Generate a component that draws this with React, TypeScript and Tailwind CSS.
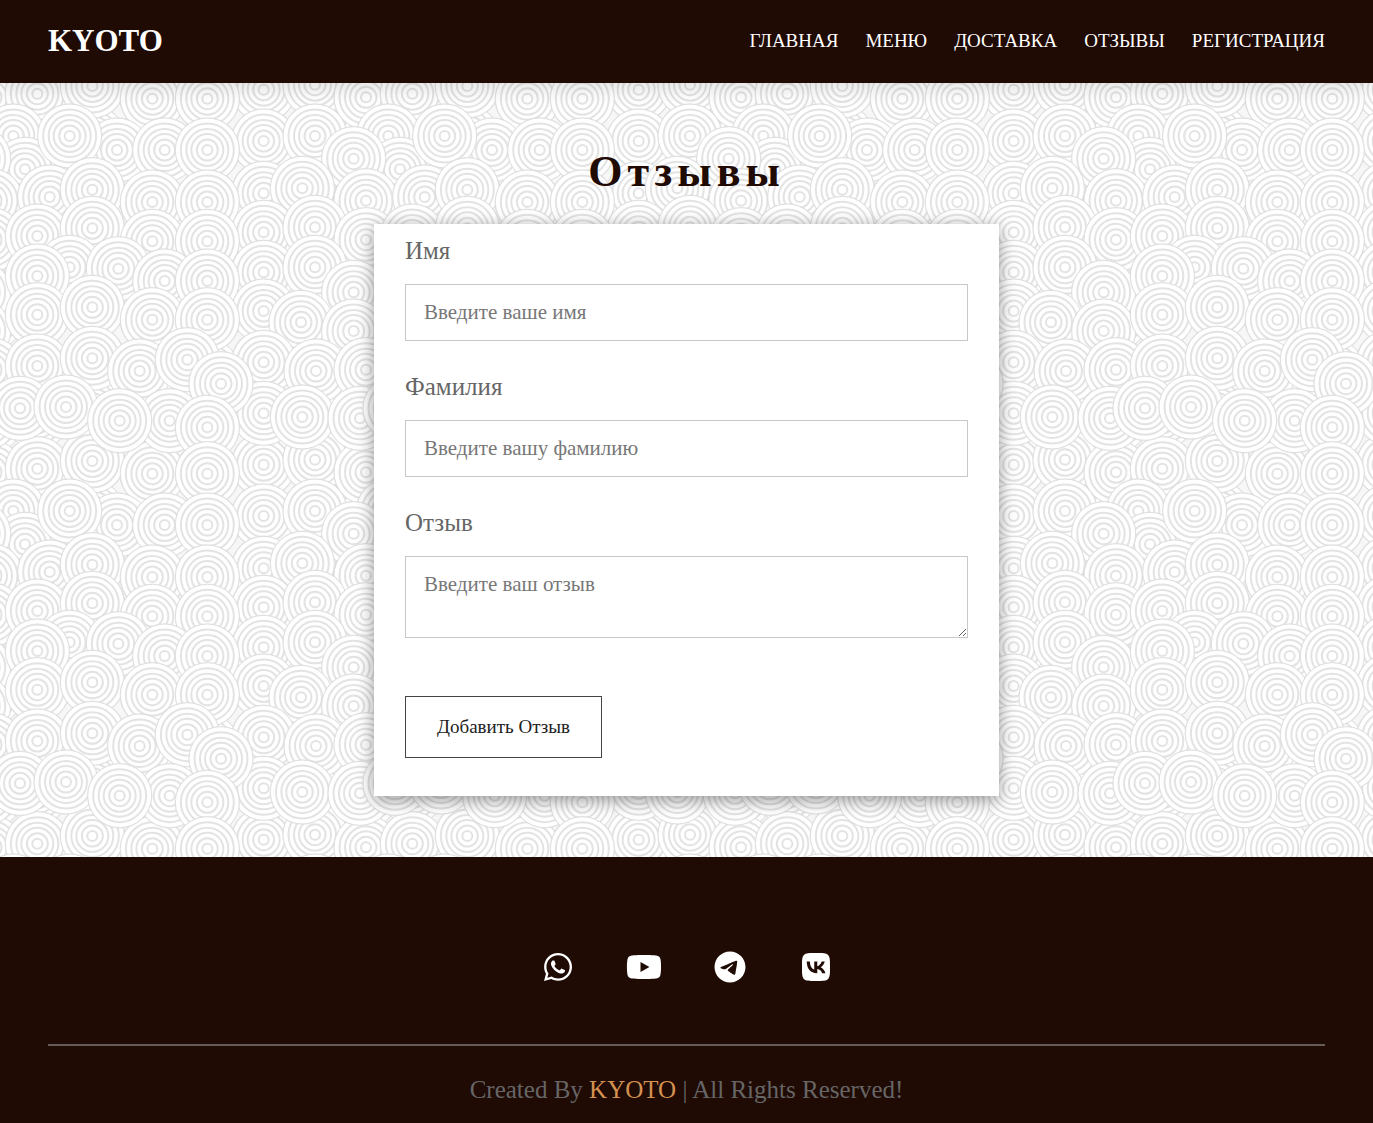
import type { IconType } from "react-icons";
import { FaTelegram, FaVk, FaWhatsapp, FaYoutube } from "react-icons/fa6";

const TILE = 375;
const RING_RADII = [5, 10.5, 16, 21, 26.5];

type Point = [number, number];

/* Coordinates are in thirds of a pixel, on a 1125 x 1125 tile. */
const columns: Point[] = [
  [791, 20], [945, 5], [1098, 43], [112, 32], [277, 9], [457, 47], [622, 47],
];
const rowOffsets = [0, 154, 310, 428, 547, 663, 817, 970];

const baseDiscs: Point[] = rowOffsets.flatMap((dy) =>
  columns.map(([x, y]): Point => [x, y + dy]),
);

const topDiscs: Point[] = [
  [791, 20], [945, 5], [1098, 43], [112, 32], [277, 9], [457, 47], [622, 47],
  [791, 174], [945, 159], [40, 159], [75, 259], [1061, 227], [351, 201], [209, 159], [494, 201], [622, 201],
  [791, 331], [907, 316], [1098, 353], [149, 342], [277, 320], [457, 357], [622, 357],
  [791, 448], [945, 433], [1098, 470], [112, 459], [277, 436], [457, 475], [622, 475],
  [791, 568], [945, 553], [1061, 628], [209, 553], [112, 579], [355, 557], [494, 594], [622, 594],
  [791, 684], [903, 718], [1061, 744], [112, 695], [277, 673], [457, 710], [622, 710],
  [791, 838], [948, 864], [1098, 860], [112, 849], [277, 826], [419, 864], [562, 830],
  [791, 991], [907, 1002], [1080, 1006], [60, 976], [198, 972], [509, 1013], [359, 1013], [663, 902], [622, 1033],
];

const repeat = (points: Point[]) =>
  points.flatMap(([x, y]) =>
    [-1, 0, 1].flatMap((i) =>
      [0, 1].map((j): Point => [x / 3 + i * TILE, y / 3 + j * TILE]),
    ),
  );

const discs = [
  ...repeat(baseDiscs),
  ...repeat(topDiscs),
  /* The column that runs over the seam between two tiles. */
  [622 / 3, 47 / 3 + TILE] as Point,
];

function WaveBackground() {
  return (
    <svg className="absolute inset-0 h-full w-full" aria-hidden="true">
      <defs>
        <g id="disc">
          <circle r="33" fill="#d4d4d4" opacity="0.25" />
          <circle r="32" fill="#ffffff" stroke="#dedede" strokeWidth="1" />
          {RING_RADII.map((r) => (
            <circle key={r} r={r} fill="none" stroke="#e3e3e3" strokeWidth="2" />
          ))}
        </g>
        <pattern id="waves" width={TILE} height={TILE} patternUnits="userSpaceOnUse">
          <rect width={TILE} height={TILE} fill="#f7f7f7" />
          {discs.map(([x, y], i) => (
            <use key={i} href="#disc" x={x} y={y} />
          ))}
        </pattern>
      </defs>
      <rect width="100%" height="100%" fill="url(#waves)" />
    </svg>
  );
}

const navItems = ["Главная", "Меню", "Доставка", "Отзывы", "Регистрация"];

const socials: { name: string; Icon: IconType }[] = [
  { name: "WhatsApp", Icon: FaWhatsapp },
  { name: "YouTube", Icon: FaYoutube },
  { name: "Telegram", Icon: FaTelegram },
  { name: "VK", Icon: FaVk },
];

const fieldClass =
  "mt-[19px] block w-full border border-[#c8c8c8] bg-white px-[18px] text-[21px] leading-6 text-[#666] placeholder:text-[#777] outline-none";
const labelClass = "block text-[25px] leading-7 text-[#666]";

export default function App() {
  return (
    <div className="flex min-h-screen flex-col bg-[#1f0a04] font-['Liberation_Serif',serif]">
      <header className="relative z-10 flex items-center justify-between bg-[#1f0a04] px-12 pt-[21px] pb-[23px] shadow-[0_8px_16px_rgba(0,0,0,0.1)]">
        <a href="#" className="text-[31px] leading-[39px] font-bold text-white">KYOTO</a>
        <nav className="flex gap-[27px]">
          {navItems.map((item) => (
            <a key={item} href="#" className="text-[19px] leading-6 text-white uppercase">
              {item}
            </a>
          ))}
        </nav>
      </header>

      <main className="relative px-12 pt-[65px] pb-[61px]">
        <WaveBackground />
        <div className="relative">
          <h1 className="text-center text-[44px] leading-[48px] font-bold tracking-[5px] text-[#1f0a04]">
            Отзывы
          </h1>
          <form
            onSubmit={(e) => e.preventDefault()}
            className="mx-auto mt-7 max-w-[625px] bg-white px-[31px] pt-[13px] pb-[38px] shadow-[0_4px_16px_rgba(0,0,0,0.4)]"
          >
            <label htmlFor="first-name" className={labelClass}>Имя</label>
            <input id="first-name" type="text" placeholder="Введите ваше имя" className={`${fieldClass} h-[57px]`} />
            <label htmlFor="last-name" className={`${labelClass} mt-8`}>Фамилия</label>
            <input id="last-name" type="text" placeholder="Введите вашу фамилию" className={`${fieldClass} h-[57px]`} />
            <label htmlFor="review" className={`${labelClass} mt-8`}>Отзыв</label>
            <textarea id="review" placeholder="Введите ваш отзыв" className={`${fieldClass} h-[82px] resize py-[15px]`} />
            <button type="submit" className="mt-[58px] border border-[#444] bg-white px-[31px] py-[18px] text-[19px] leading-6 text-[#222]">
              Добавить Отзыв
            </button>
          </form>
        </div>
      </main>

      <footer className="px-12 pt-[94px] pb-4 text-center">
        <div className="flex justify-center gap-[50px]">
          {socials.map(({ name, Icon }) => (
            <a key={name} href="#" aria-label={name} className="text-white">
              <Icon className="h-8 w-9" />
            </a>
          ))}
        </div>
        <p className="mt-[61px] border-t-2 border-[#665b57] pt-[30px] text-[25px] leading-7 text-[#666]">
          Created By <span className="text-[#d59150]">KYOTO</span> | All Rights Reserved!
        </p>
      </footer>
    </div>
  );
}
